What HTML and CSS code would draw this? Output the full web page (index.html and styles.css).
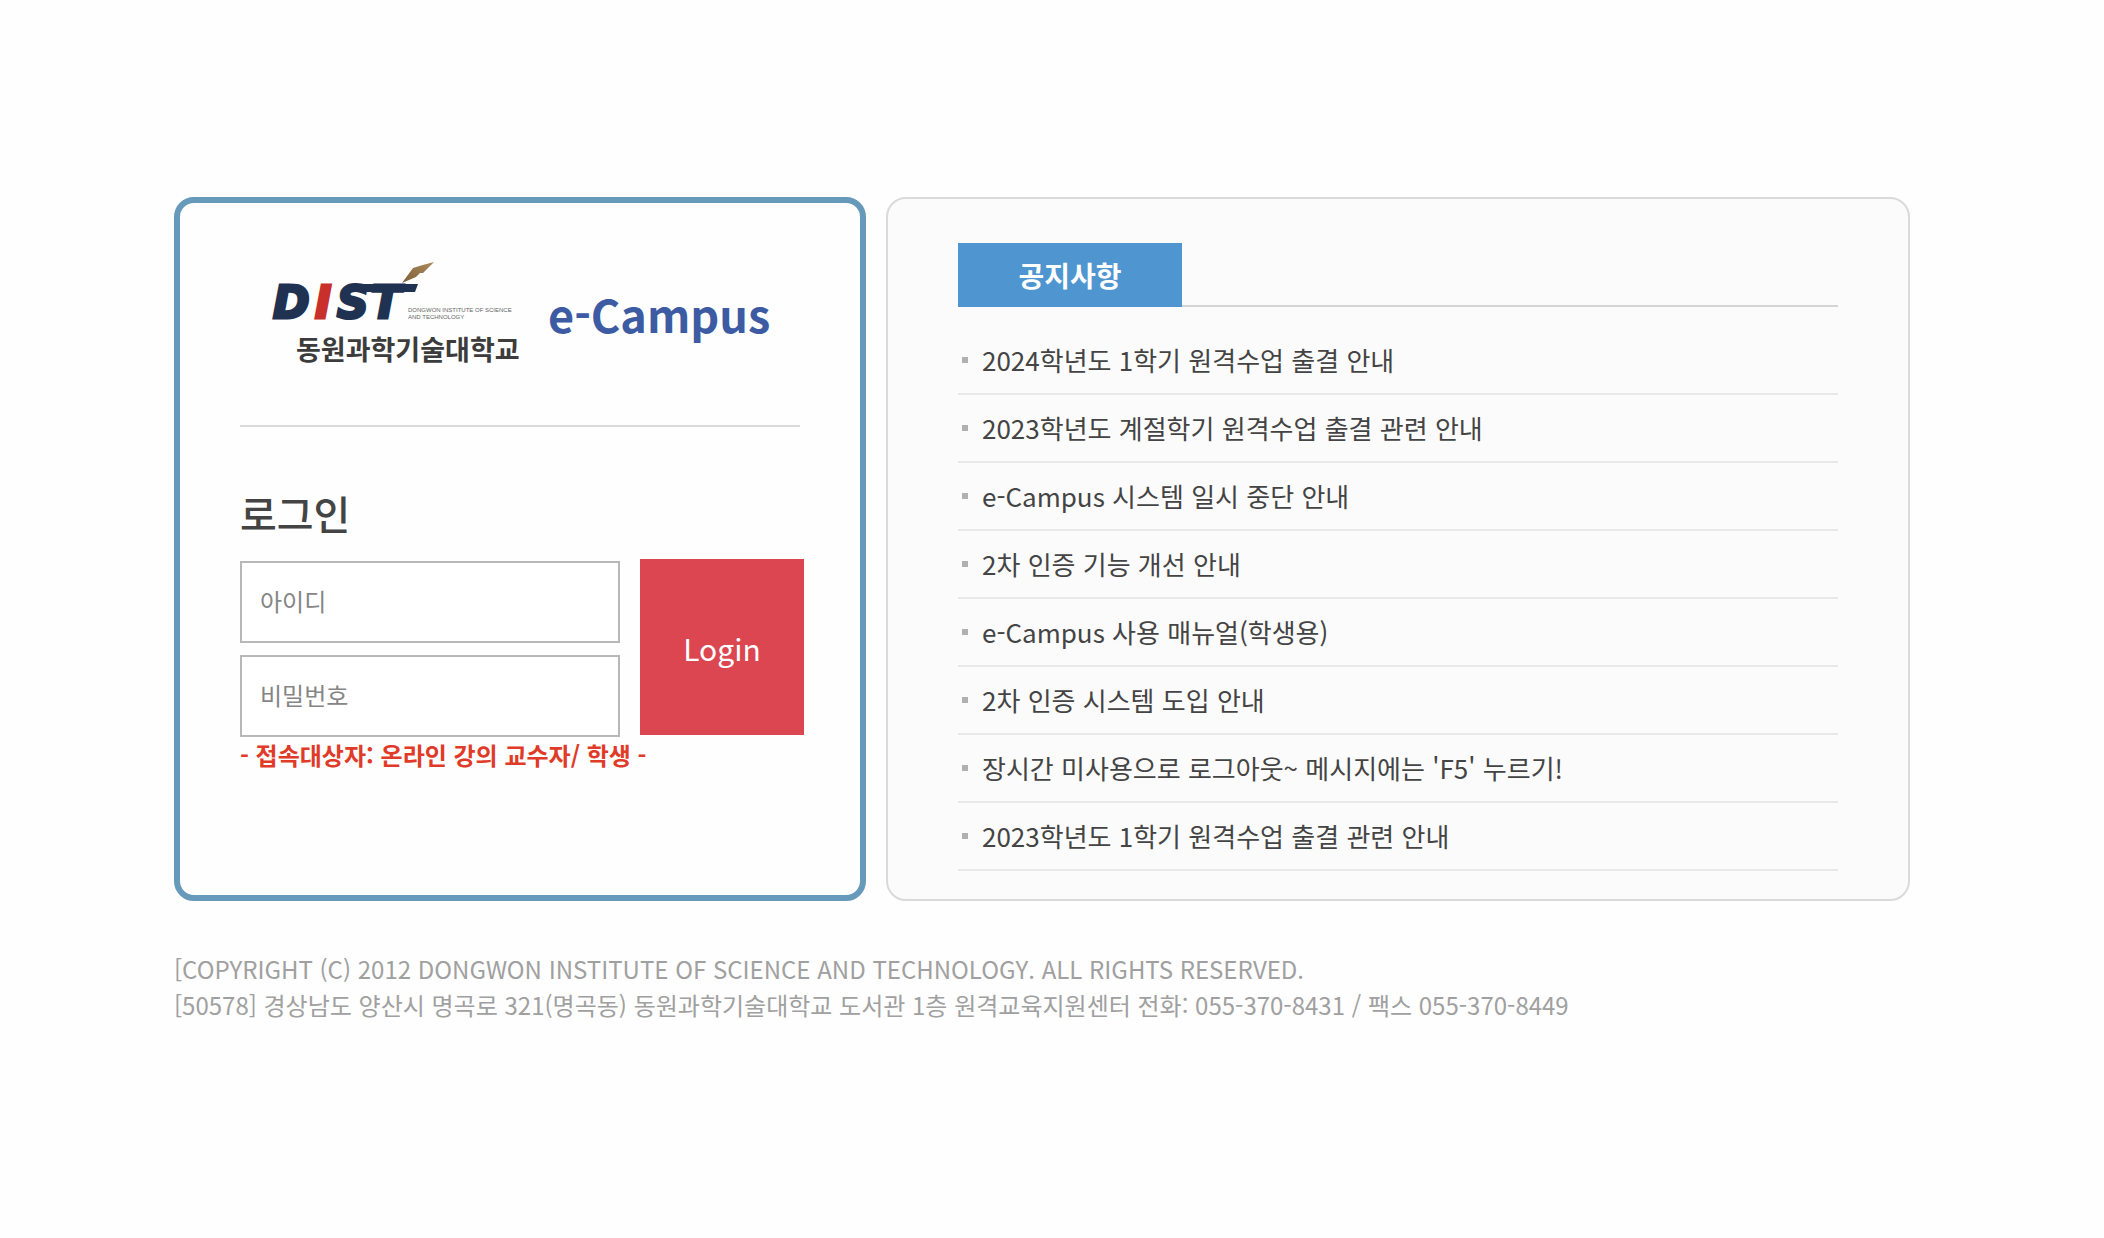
FILE: index.html
```html
<!DOCTYPE html>
<html lang="ko">

<head>
  <meta charset="UTF-8">
  <meta name="viewport" content="width=device-width, initial-scale=1.0">
  <title>동원과학기술대학교 e-Campus</title>
  <link rel="stylesheet" href="styles.css">
</head>

<body>
  <div class="login-page">
    <main class="panels">
      <section class="login-card">
        <div class="logo">
          <svg viewBox="0 0 496 104" role="img" aria-label="DIST 동원과학기술대학교 e-Campus">
            <defs>
              <linearGradient id="feather" x1="0" y1="1" x2="1" y2="0">
                <stop offset="0" stop-color="#7d6038" />
                <stop offset="1" stop-color="#ad8a5c" />
              </linearGradient>
            </defs>
            <g class="logo-mark">
              <text x="1" y="56">D</text>
              <text class="logo-red" x="43" y="56">I</text>
              <text x="65" y="56">S</text>
              <text x="99" y="56">T</text>
            </g>
            <!-- long bar over the S and T -->
            <path d="M92 22 H146 L143 30 H90 Z" fill="#1f3252" />
            <path d="M130 21 L141 6 Q150 3 162 0 L151 11 L148 11 L144 15 Z" fill="url(#feather)" />
            <g class="logo-caption">
              <text x="136" y="50">DONGWON INSTITUTE OF SCIENCE</text>
              <text x="136" y="57">AND TECHNOLOGY</text>
            </g>
            <text class="logo-korean" x="24" y="98">동원과학기술대학교</text>
            <text class="logo-campus" x="276" y="71">e-Campus</text>
          </svg>
        </div>

        <h1>로그인</h1>
        <form class="login-form">
          <div class="fields">
            <input type="text" name="userid" placeholder="아이디" aria-label="아이디" autocomplete="username">
            <input type="password" name="password" placeholder="비밀번호" aria-label="비밀번호"
              autocomplete="current-password">
          </div>
          <button type="submit" class="login-button">Login</button>
        </form>
        <p class="login-note">- 접속대상자: 온라인 강의 교수자/ 학생 -</p>
      </section>

      <section class="notice-card">
        <div class="notice-header">
          <h2>공지사항</h2>
        </div>
        <ul class="notice-list">
          <li><a href="#">2024학년도 1학기 원격수업 출결 안내</a></li>
          <li><a href="#">2023학년도 계절학기 원격수업 출결 관련 안내</a></li>
          <li><a href="#">e-Campus 시스템 일시 중단 안내</a></li>
          <li><a href="#">2차 인증 기능 개선 안내</a></li>
          <li><a href="#">e-Campus 사용 매뉴얼(학생용)</a></li>
          <li><a href="#">2차 인증 시스템 도입 안내</a></li>
          <li><a href="#">장시간 미사용으로 로그아웃~ 메시지에는 'F5' 누르기!</a></li>
          <li><a href="#">2023학년도 1학기 원격수업 출결 관련 안내</a></li>
        </ul>
      </section>
    </main>

    <footer class="footer">
      <p>[COPYRIGHT (C) 2012 DONGWON INSTITUTE OF SCIENCE AND TECHNOLOGY. ALL RIGHTS RESERVED.</p>
      <p>[50578] 경상남도 양산시 명곡로 321(명곡동) 동원과학기술대학교 도서관 1층 원격교육지원센터 전화: 055-370-8431 / 팩스 055-370-8449</p>
    </footer>
  </div>
</body>

</html>
```
FILE: styles.css
```css
:root {
  --card-blue: #6699ba;
  --tab-blue: #4f95cf;
  --login-red: #dc4651;
  --note-red: #e03a28;
  --text-dark: #444444;
  --text-light: #a0a0a0;
  --line: #dadada;
  --radius: 20px;
}

* {
  margin: 0;
  padding: 0;
  box-sizing: border-box;
}

body {
  font-family: "Noto Sans CJK KR", "Noto Sans", sans-serif;
  background: #fefefe;
  color: var(--text-dark);
}

.login-page {
  max-width: 1756px;
  margin: 0 auto;
  padding: 197px 20px 60px 0;
}

.panels {
  display: grid;
  grid-template-columns: 692fr 1024fr;
  gap: 20px;
}

/* Login */
.login-card {
  padding: 0 56px 40px 60px;
  border: 6px solid var(--card-blue);
  border-radius: var(--radius);
  background: #fefefe;
}

.logo {
  margin-right: 4px;
  padding: 59px 32px;
  border-bottom: 2px solid var(--line);
}

.logo svg {
  display: block;
  width: 100%;
  overflow: visible;
}

.logo-mark {
  font: italic 700 44px "DejaVu Sans", sans-serif;
  fill: #1f3252;
  stroke: #1f3252;
  stroke-width: 3;
}

.logo-mark .logo-red {
  fill: #c9302c;
  stroke: #c9302c;
}

.logo-caption {
  font: 6px "Liberation Sans", sans-serif;
  fill: #666666;
}

.logo-korean {
  font-size: 27px;
  font-weight: 700;
  fill: #3c3c3c;
}

.logo-campus {
  font-size: 45px;
  font-weight: 700;
  fill: #3c5ba3;
}

.login-card h1 {
  margin: 56px 0 16px;
  font-size: 40px;
  font-weight: 500;
  line-height: 60px;
}

.login-form {
  display: flex;
  align-items: flex-start;
  gap: 20px;
}

.fields {
  flex: 1;
  display: grid;
  gap: 12px;
  padding-top: 2px;
}

.fields input {
  width: 100%;
  height: 82px;
  padding: 0 18px 4px;
  border: 2px solid #b8b8b8;
  background: #ffffff;
  font-family: inherit;
  font-size: 24px;
  color: var(--text-dark);
}

.fields input::placeholder {
  color: #858585;
}

.login-button {
  width: 164px;
  height: 176px;
  padding-top: 2px;
  border: none;
  background: var(--login-red);
  color: #ffffff;
  font-family: inherit;
  font-size: 30px;
  cursor: pointer;
}

.login-note {
  color: var(--note-red);
  font-size: 24px;
  font-weight: 700;
  line-height: 36px;
}

/* Notices */
.notice-card {
  padding: 44px 70px 28px;
  border: 2px solid var(--line);
  border-radius: var(--radius);
  background: #fbfbfb;
}

.notice-header {
  display: flex;
  background: linear-gradient(#d4d4d4, #d4d4d4) bottom / 100% 2px no-repeat;
}

.notice-header h2 {
  width: 224px;
  background: var(--tab-blue);
  color: #ffffff;
  font-size: 28px;
  font-weight: 700;
  line-height: 64px;
  text-align: center;
}

.notice-list {
  margin-top: 20px;
  list-style: none;
}

.notice-list li {
  display: flex;
  align-items: center;
  gap: 14px;
  padding-left: 4px;
  border-bottom: 2px solid #e9e9e9;
  font-size: 26px;
  line-height: 66px;
}

.notice-list li::before {
  content: "";
  width: 6px;
  height: 6px;
  background: #b0b0b0;
}

.notice-list a {
  color: inherit;
  text-decoration: none;
}

.notice-list a:hover {
  text-decoration: underline;
}

.footer {
  margin-top: 50px;
  color: var(--text-light);
  font-size: 24px;
  line-height: 36px;
}
```
